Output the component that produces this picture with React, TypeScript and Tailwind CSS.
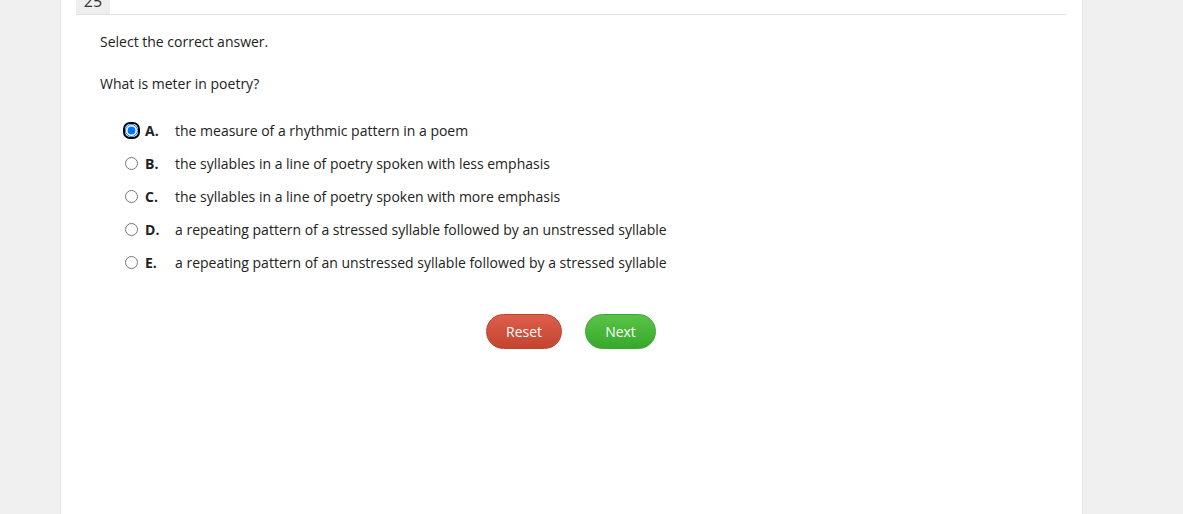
import React from 'react';

const options = [
  { key: 'A', text: 'the measure of a rhythmic pattern in a poem' },
  { key: 'B', text: 'the syllables in a line of poetry spoken with less emphasis' },
  { key: 'C', text: 'the syllables in a line of poetry spoken with more emphasis' },
  { key: 'D', text: 'a repeating pattern of a stressed syllable followed by an unstressed syllable' },
  { key: 'E', text: 'a repeating pattern of an unstressed syllable followed by a stressed syllable' },
];

export default function App() {
  return (
    <div className="min-h-[514px] bg-[#f0f0f0] font-['Open_Sans',sans-serif] text-[14px] text-[#222]">
      <div className="ml-[60px] w-[1023px] min-h-[514px] bg-white border-x border-[#e6e6e6] pl-[15px] pr-4">
        {/* question tab strip */}
        <div className="flex h-[15px] border-b border-[#e2e2e2]">
          <div className="w-[34px] h-[14px] bg-[#eeeeee] overflow-hidden flex justify-center">
            <span className="-mt-[9px] text-[16px] leading-[20px] text-[#333]">25</span>
          </div>
        </div>

        <div className="pl-6">
          <p className="mt-[17px] leading-[20px]">Select the correct answer.</p>
          <p className="mt-[22px] leading-[20px]">What is meter in poetry?</p>

          <div className="mt-[20px] pl-[25px] flex flex-col">
            {options.map((o) => (
              <label key={o.key} className="flex items-center h-[33px]">
                <span
                  className={
                    o.key === 'A'
                      ? 'inline-flex w-[13px] h-[13px] rounded-[5px] shadow-[0_0_0_2px_#000]'
                      : 'inline-flex w-[13px] h-[13px]'
                  }
                >
                  <input
                    type="radio"
                    name="answer"
                    defaultChecked={o.key === 'A'}
                    className="w-[13px] h-[13px] m-0 outline-none"
                  />
                </span>
                <span className="ml-[7px] w-[30px] font-bold">{o.key}.</span>
                <span>{o.text}</span>
              </label>
            ))}
          </div>
        </div>

        <div className="mt-[35px] flex justify-center gap-[23px]">
          <button className="h-[35px] w-[76px] rounded-full bg-gradient-to-b from-[#dc5e4b] to-[#c44430] border border-[#c0432f] text-white text-[14px]">
            Reset
          </button>
          <button className="h-[35px] w-[71px] rounded-full bg-gradient-to-b from-[#58c447] to-[#37a82b] border border-[#3aaa2e] text-white text-[14px]">
            Next
          </button>
        </div>
      </div>
    </div>
  );
}
